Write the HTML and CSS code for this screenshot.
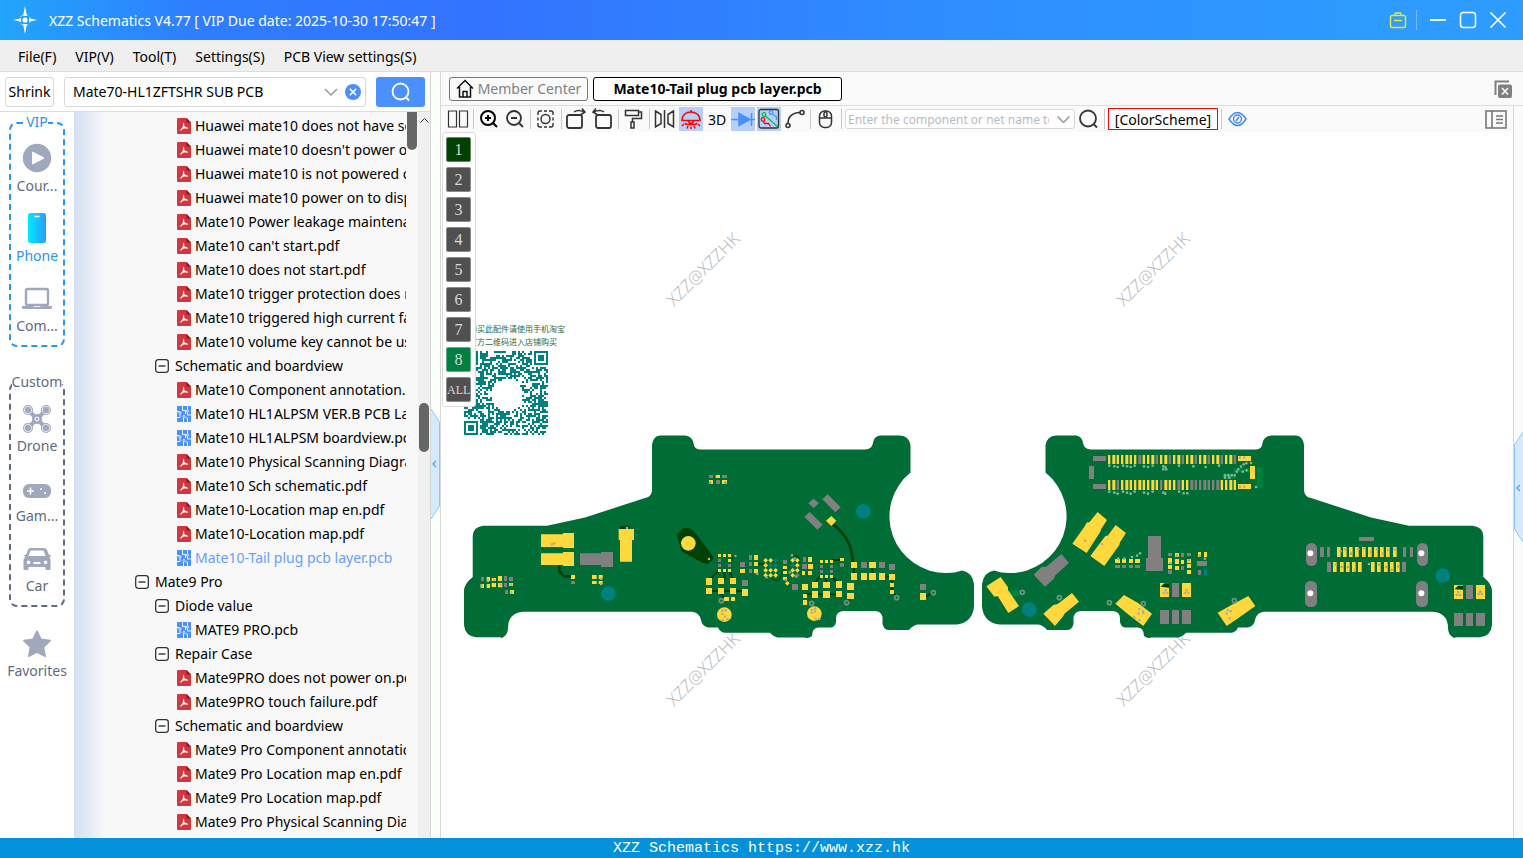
FILE: index.html
```html
<!DOCTYPE html>
<html lang="en">
<head>
<meta charset="utf-8">
<title>XZZ Schematics</title>
<link rel="stylesheet" href="styles.css">
</head>
<body>
<svg class="defs" aria-hidden="true">
  <defs>
    <linearGradient id="phoneFill"><stop offset="0" stop-color="#00eaff"/><stop offset="1" stop-color="#2f9bff"/></linearGradient>
    <symbol id="i-pdf" viewBox="0 0 14 16"><path fill="#d2373f" d="M1 0h8.500L14 4.500V15a1 1 0 0 1-1 1H1a1 1 0 0 1-1-1V1a1 1 0 0 1 1-1z"/><path fill="#8f1a22" d="M9.500 0L14 4.500h-4.500z"/><path fill="none" stroke="#fff" stroke-width="1.100" d="M6.600 5v2.200c0 2-1.300 4-3.300 5.200M6.600 7.500c.6 1.700 2 2.600 4.400 2.700M4.800 10.600c1.700-.7 3.300-1 5-.9"/></symbol>
    <symbol id="i-pcb" viewBox="0 0 14 16"><rect width="14" height="16" rx="1" fill="#4a90ff"/><path fill="none" stroke="#fff" stroke-width=".9" d="M5.500 0v4.500H8.500V8M10.500 0v4M10.500 6v3H14M0 5.500h2.500M3 8v3.500H0M6.500 11.500V16M10.500 16v-4h-2"/><g fill="none" stroke="#fff" stroke-width=".8"><circle cx="3" cy="6.800" r="1.100"/><circle cx="10.500" cy="5" r="1.100"/><circle cx="7" cy="10.500" r="1.100"/></g></symbol>
    <symbol id="i-minus" viewBox="0 0 14 14"><rect x=".7" y=".7" width="12.600" height="12.600" rx="2.500" fill="#fff" stroke="#333" stroke-width="1.300"/><path stroke="#222" stroke-width="1.300" d="M3.500 7h7"/></symbol>
  </defs>
</svg>
<div class="app">
  <header class="titlebar">
    <svg class="logo" viewBox="0 0 24 28"><path fill="#fff" d="M12 0l2 10h-4zM12 28l2-10h-4zM0 14l8-1.800v3.600zM24 14l-8-1.800v3.600z"/><circle cx="12" cy="14" r="5.500" fill="none" stroke="#bfe4ff" stroke-width="1" stroke-dasharray="3 2"/><circle cx="12" cy="14" r="2.600" fill="#fff"/></svg>
    <h1 class="title">XZZ Schematics V4.77 [ VIP Due date: 2025-10-30 17:50:47 ]</h1>
    <button class="win" aria-label="Toolbox"><svg viewBox="0 0 18 18" fill="none" stroke="#e5e83a" stroke-width="1.500"><rect x="1.500" y="4.500" width="15" height="12" rx="1.500"/><path d="M5.500 4.500L6.500 2h5l1 2.500M5 9.500h8"/></svg></button>
    <span class="win-line"></span>
    <button class="win" aria-label="Minimize"><svg viewBox="0 0 18 18" stroke="#fff" stroke-width="1.800"><path d="M1 9h16"/></svg></button>
    <button class="win" aria-label="Maximize"><svg viewBox="0 0 18 18" fill="none" stroke="#fff" stroke-width="1.500"><rect x="1.500" y="1.500" width="15" height="15" rx="3"/></svg></button>
    <button class="win" aria-label="Close"><svg viewBox="0 0 18 18" stroke="#fff" stroke-width="1.600"><path d="M1.500 1.500l15 15M16.500 1.500l-15 15"/></svg></button>
  </header>
  <nav class="menubar">
    <button>File(F)</button><button>VIP(V)</button><button>Tool(T)</button><button>Settings(S)</button><button>PCB View settings(S)</button>
  </nav>
  <main class="main">
    <section class="left">
      <div class="search">
        <button class="shrink">Shrink</button>
        <div class="combo">
          <input type="text" aria-label="Search files" value="Mate70-HL1ZFTSHR SUB PCB">
          <button aria-label="History"><svg width="14" height="8" viewBox="0 0 14 8" fill="none" stroke="#999ea8" stroke-width="1.600"><path d="M1 1l6 6 6-6"/></svg></button>
          <button aria-label="Clear"><svg width="16" height="16" viewBox="0 0 16 16"><circle cx="8" cy="8" r="8" fill="#4a8ff5"/><path stroke="#fff" stroke-width="1.600" d="M4.800 4.800l6.400 6.400M11.200 4.800l-6.400 6.400"/></svg></button>
        </div>
        <button class="go" aria-label="Search"><svg width="22" height="20" viewBox="0 0 22 20" fill="none" stroke="#fff" stroke-width="1.800"><circle cx="10.500" cy="9.500" r="8"/><path d="M16 15.500l3 3"/></svg></button>
      </div>
      <div class="browse">
        <nav class="side">
          <section class="group vip">
            <h2>VIP</h2>
            <button class="cat"><svg viewBox="0 0 30 30"><circle cx="15" cy="15" r="14.200" fill="#9fa8bc"/><path fill="#fff" stroke="#fff" stroke-width="1" stroke-linejoin="round" d="M10.500 9l11.500 6-11.500 6z"/></svg>Cour...</button>
            <button class="cat on"><svg viewBox="0 0 30 30"><rect x="6" y="0" width="18" height="30" rx="2.500" fill="url(#phoneFill)"/><path stroke="#fff" stroke-width="1.500" d="M12.500 3.500h5"/></svg>Phone</button>
            <button class="cat"><svg viewBox="0 0 30 30"><rect x="4" y="6" width="22" height="16" rx="1.500" fill="none" stroke="#9fa8bc" stroke-width="2.400"/><path fill="#9fa8bc" d="M0 23h11l1 1h6l1-1h11v1.500q0 1.500-2 1.500H2q-2 0-2-1.500z"/></svg>Com...</button>
          </section>
          <section class="group custom">
            <h2>Custom</h2>
            <button class="cat"><svg viewBox="0 0 30 30"><path stroke="#9fa8bc" stroke-width="4" d="M6 7l18 18M24 7L6 25"/><g fill="#9fa8bc"><circle cx="6" cy="7" r="5"/><circle cx="24" cy="7" r="5"/><circle cx="6" cy="25" r="5"/><circle cx="24" cy="25" r="5"/><circle cx="15" cy="16" r="5"/></g><g fill="none" stroke="#fff" stroke-width=".7"><circle cx="6" cy="7" r="3.700"/><circle cx="24" cy="7" r="3.700"/><circle cx="6" cy="25" r="3.700"/><circle cx="24" cy="25" r="3.700"/></g><circle cx="15" cy="16" r="2" fill="none" stroke="#fff"/></svg>Drone</button>
            <button class="cat"><svg viewBox="0 0 30 30"><rect x="1" y="11" width="28" height="14" rx="6" fill="#9fa8bc"/><path stroke="#fff" stroke-width="1.500" d="M5 18h7M8.500 14.500v7"/><circle cx="19" cy="16" r="1" fill="#fff"/><circle cx="23" cy="20" r="1" fill="#fff"/></svg>Gam...</button>
            <button class="cat"><svg viewBox="0 0 30 30"><path fill="#9fa8bc" fill-rule="evenodd" d="M8 5h14q2.500 0 3.300 2.500L27 12l1.500-.5q1 1.500-.8 2.500l.8 2.500V26q0 1-1 1h-3q-1 0-1-1v-2h-17v2q0 1-1 1h-3q-1 0-1-1v-9.500L3.300 14q-1.800-1-.8-2.500L4 12l1.700-4.500Q6.500 5 8 5zM8.500 7.500L6.500 13h17l-2-5.500zM6.500 17.500a1.800 1.800 0 1 0 .1 0zM23.500 17.500a1.800 1.800 0 1 0 .1 0zM11.500 19v2h7v-2z"/></svg>Car</button>
          </section>
          <button class="cat fav"><svg viewBox="0 0 30 30"><path fill="#9fa8bc" stroke="#9fa8bc" stroke-width="1.500" stroke-linejoin="round" d="M15 3l4 8.300 9.200 1.300-6.700 6.500 1.700 9.200-8.200-4.300-8.200 4.300 1.700-9.200-6.700-6.500 9.200-1.300z"/></svg>Favorites</button>
        </nav>
        <ul class="tree" id="tree"></ul>
        <div class="inner-scroll"><span></span></div>
        <div class="outer-scroll"><svg width="9" height="5" viewBox="0 0 9 5" fill="none" stroke="#333"><path d="M.5 4.500l4-4 4 4"/></svg><span></span></div>
      </div>
    </section>
    <div class="splitter"><button aria-label="Collapse"><svg viewBox="0 0 9 110"><path fill="#d6eaff" stroke="#8fc6f7" d="M0 0l8.500 13v84L0 110"/><path fill="none" stroke="#4a9ff0" stroke-width="1.200" d="M5 52L2 55l3 3"/></svg></button></div>
    <section class="work">
      <div class="tabs">
        <button class="tab home"><svg width="18" height="19" viewBox="0 0 18 19" fill="none" stroke="#111" stroke-width="1.500"><path d="M1 9.500L9 1.500l8 8M3.500 8v10h11V8M7 18v-5.500h4V18"/></svg>Member Center</button>
        <button class="tab current">Mate10-Tail plug pcb layer.pcb</button>
        <button class="closeall" aria-label="Close all"><svg width="18" height="18" viewBox="0 0 18 18"><path fill="none" stroke="#808080" stroke-width="2" d="M1.500 15V1.500H15"/><rect x="4" y="4.500" width="14" height="13.500" rx="2" fill="#808080"/><path stroke="#fff" stroke-width="1.500" d="M8 8l6 6.500M14 8l-6 6.500"/></svg></button>
      </div>
      <div class="below">
        <div class="view">
          <div class="toolbar">
            <button aria-label="Split view"><svg viewBox="0 0 24 24"><path d="M2.500 4h8v16h-8zM13.500 4h8v16h-8z" stroke-width="1.200"/></svg></button><i></i>
            <button aria-label="Zoom in"><svg viewBox="0 0 24 24" stroke="#000" stroke-width="2"><circle cx="11" cy="11" r="7"/><path d="M16 16l4 4M8 11h6M11 8v6"/></svg></button>
            <button aria-label="Zoom out"><svg viewBox="0 0 24 24"><circle cx="11" cy="11" r="7"/><path d="M16 16l4 4M8 11h6"/></svg></button><i></i>
            <button aria-label="Fit"><svg viewBox="0 0 24 24" stroke-width="1.400"><circle cx="11.500" cy="12" r="4.500"/><path d="M4 8V6q0-2 2-2h2M15 4h2q2 0 2 2v2M19 16v2q0 2-2 2h-2M8 20H6q-2 0-2-2v-2M10 4h3M10 20h3M4 10.500v3M19 10.500v3"/></svg></button><i></i>
            <button aria-label="Rotate right"><svg viewBox="0 0 24 24"><rect x="2" y="8" width="15" height="13" rx="2"/><path d="M9 5Q13 2 19.500 5M17 1.500l3 3.500-4 2.500" stroke-width="1.500"/></svg></button>
            <button aria-label="Rotate left"><svg viewBox="0 0 24 24"><rect x="5" y="8" width="15" height="13" rx="2"/><path d="M13 5Q9 2 2.500 5M5 1.500L2 5l4 2.500" stroke-width="1.500"/></svg></button><i></i>
            <button aria-label="Paint"><svg viewBox="0 0 24 24"><path d="M3.500 3.500h13v5h-13zM16.500 5h3v6.500h-9V15M9 15h3v6H9z" stroke-width="1.500"/></svg></button><i></i>
            <button aria-label="Mirror"><svg viewBox="0 0 24 24"><path d="M2.500 4l5.500 3.500v9L2.500 20zM20.500 4L15 7.500v9l5.500 3.500zM11.500 3v18" stroke-width="1.500"/></svg></button>
            <button class="active" aria-label="Lamp"><svg viewBox="0 0 24 24" stroke="#f00" stroke-width="1.500"><path d="M3 13.500C3 2 21 2 21 13.500zM12 3v2M6 16q1 1.500 3 1.500h6q2 0 3-1.500M9 14q3 5 6 0M5 17l-2 2M19 17l2 2M9 19l-1 2.500M12 19.500v2.500M15 19l1 2.500"/></svg></button>
            <button class="three">3D</button>
            <button class="active" aria-label="Diode"><svg viewBox="0 0 24 24" stroke="#4a90ff" stroke-width="1.500"><path d="M0 12.500h24M20.500 6v13"/><path fill="#4a90ff" d="M8 6.500l11 6-11 6z"/></svg></button>
            <button class="active" aria-label="Nets"><svg viewBox="0 0 24 24" stroke-width="1.300"><rect x="2" y="2.500" width="19.500" height="18.500" rx="2"/><path stroke="#00c040" d="M8 8.500l13 11.500"/><circle cx="7" cy="7.500" r="1.800" stroke="#00c040"/><circle cx="14" cy="5.500" r="1.800" stroke="#4a90ff"/><path stroke="#4a90ff" d="M15.500 7l4 3v3"/><circle cx="6" cy="12.500" r="1.800" stroke="#f00"/><path stroke="#f00" d="M6.500 14.500l1 2h4l2 3"/></svg></button>
            <button aria-label="Trace"><svg viewBox="0 0 24 24" stroke-width="1.600"><circle cx="5" cy="18.500" r="2"/><circle cx="19" cy="5.500" r="2"/><path d="M5 16.500Q5 6 17 5.500"/></svg></button><i></i>
            <button aria-label="Mouse"><svg viewBox="0 0 24 24" stroke-width="1.500"><rect x="5.500" y="4" width="12" height="16.500" rx="5"/><path d="M5.500 11h12M11.500 4v1"/><rect x="10" y="5" width="3" height="5" rx="1.500"/></svg></button><i></i>
            <div class="combo net"><input type="text" aria-label="Component or net name" placeholder="Enter the component or net name to search"><button aria-label="Open list"><svg width="13" height="7" viewBox="0 0 13 7" fill="none" stroke="#999" stroke-width="1.500"><path d="M.5 .5l6 6 6-6"/></svg></button></div>
            <button aria-label="Find"><svg viewBox="0 0 24 24" stroke-width="1.800"><circle cx="11" cy="11.500" r="8"/><path d="M17 17.500l3 3"/></svg></button><i></i>
            <button class="scheme">[ColorScheme]</button><i></i>
            <button aria-label="Visibility"><svg viewBox="0 0 24 24" stroke="#3f86f0" stroke-width="1.400"><path d="M4 12Q12.500 -1 21 12Q12.500 25 4 12z"/><circle cx="12.500" cy="12" r="4"/><path d="M11 14l3-4"/></svg></button>
            <button class="list" aria-label="Panel"><svg viewBox="0 0 24 24" stroke="#777" stroke-width="1.600"><rect x="2" y="4" width="20" height="17"/><path d="M8 4v17M12 9h7M12 12.500h7M12 16h7"/></svg></button>
          </div>
          <div class="canvas">
            <svg class="board" id="board" viewBox="441 132 1072 706" preserveAspectRatio="xMinYMin meet">
              <g class="mark">
                <text transform="translate(674 307) rotate(-45)">XZZ@XZZHK</text>
                <text transform="translate(1124 307) rotate(-45)">XZZ@XZZHK</text>
                <text transform="translate(674 707) rotate(-45)">XZZ@XZZHK</text>
                <text transform="translate(1124 707) rotate(-45)">XZZ@XZZHK</text>
              </g>
              <text class="note" x="469" y="332">购买此配件请使用手机淘宝</text>
              <text class="note" x="469" y="345">官方二维码进入店铺购买</text>
              <path id="qr" fill="#008080" shape-rendering="crispEdges"/>
              <path id="outline" fill="#006c36" d="M652 445Q653 436 660 435.500H685Q692 436 693.500 443Q694 449 700 449.500H865Q872 449 873 443Q874 436 880 435.500H900Q909 436 910.500 445V472.500A56.500 56.500 0 0 0 947 573Q955 573 962 570.500Q972 572 974 584V606Q973 622 957 624.500H918Q913 625 909 630H889Q884 630 882.500 624V617Q881 611 875 611H843Q836 612 836 618V622Q835 627 831 627.500H818Q812 628 812 636Q808 639 805 637.500H778Q774 637 770 632.700H724Q720 632 718 627.500H708Q702 626 701 620Q699 612 692 611.700H523Q508 613 508 628Q508 635 502 638L500 637.300H476Q465 636 464 625V591Q464 584 472.700 577V536Q473 527 483 525.700H547L585 517.500L645 498Q651 497 652 491z"/>
              <use href="#outline" transform="translate(1956 0) scale(-1 1)"/>
            </svg>
            <div class="layers">
              <button class="l1">1</button><button>2</button><button>3</button><button>4</button><button>5</button><button>6</button><button>7</button><button class="l8">8</button><button class="all">ALL</button>
            </div>
          </div>
        </div>
        <div class="strip"><button aria-label="Expand"><svg viewBox="0 0 9 110"><path fill="#d6eaff" stroke="#8fc6f7" d="M9 0L.5 13v84L9 110"/><path fill="none" stroke="#4a9ff0" stroke-width="1.200" d="M6 53L3 56l3 3"/></svg></button></div>
      </div>
    </section>
  </main>
  <footer class="status">XZZ Schematics https://www.xzz.hk</footer>
</div>
<script src="app.js"></script>
</body>
</html>
```

FILE: styles.css
```css
* { box-sizing: border-box; }
body { margin: 0; font-family: "Noto Sans", "Open Sans", sans-serif; font-size: 14px; color: #000; background: #fff; }
button { font: inherit; color: inherit; background: none; border: 0; padding: 0; margin: 0; }
input { font: inherit; border: 0; outline: 0; background: none; padding: 0; min-width: 0; }
svg { display: block; }
.defs { position: absolute; width: 0; height: 0; }
.app { display: flex; flex-direction: column; height: 100vh; overflow: hidden; }

.titlebar { flex: none; height: 40px; display: flex; align-items: center; gap: 12px; padding: 0 16px 0 13px; background: linear-gradient(90deg, #22a5fb 0, #2f7dff 13%, #3373ff 32%, #2f8cff 60%, #2d9bff 90%); }
.logo { width: 24px; height: 28px; }
.title { flex: 1; margin: 0; font-size: 14px; font-weight: 400; color: #fff; white-space: nowrap; }
.win { width: 18px; height: 18px; }
.win-line { width: 1px; height: 20px; margin-left: -3px; background: #74bcff; }

.menubar { flex: none; height: 32px; display: flex; align-items: center; gap: 19px; padding: 1px 18px 0; background: #efefef; border-bottom: 1px solid #dcdcdc; }

.main { flex: 1; min-height: 0; display: flex; }
.left { flex: none; width: 431px; display: flex; flex-direction: column; border-right: 1px solid #d8d8d8; }
.search { flex: none; height: 40px; display: flex; align-items: center; padding: 0 5px; border-bottom: 1px solid #dcdcdc; }
.shrink { width: 49px; height: 30px; border: 1px solid #d8d8d8; border-radius: 3px; margin-right: 10px; white-space: nowrap; }
.combo { display: flex; align-items: center; border: 1px solid #d8d8d8; border-radius: 3px; background: #fff; }
.search .combo { flex: 1; height: 30px; padding: 0 4px 0 8px; gap: 7px; }
.combo input { flex: 1; }
.go { width: 49px; height: 30px; margin-left: 10px; border-radius: 3px; background: #4a90ff; display: grid; place-items: center; }

.browse { flex: 1; min-height: 0; display: flex; overflow: hidden; }
.side { flex: none; width: 74px; padding: 10px 9px; background: #fff; color: #5e6b80; }
.group { border: 2px dashed; border-radius: 8px; height: 225px; margin-bottom: 35px; }
.group h2 { width: max-content; margin: -12px auto 11px; font-size: 14px; font-weight: 400; line-height: 20px; background: #fff; }
.vip { border-color: #2b95f5; }
.vip h2, .cat.on { color: #2b95f5; }
.custom { border-color: #5e6b80; margin-bottom: 21px; }
.cat { width: 100%; display: flex; flex-direction: column; align-items: center; gap: 3px; margin-bottom: 17px; line-height: 20px; }
.cat svg { width: 30px; height: 30px; }

.tree { flex: 1; min-width: 0; margin: 0; padding: 2px 0 0; list-style: none; overflow: hidden; background: linear-gradient(90deg, #d5e0f2, #f8f8f8 32px); }
.row { height: 24px; width: 100%; display: flex; align-items: center; gap: 4px; white-space: nowrap; line-height: 20px; }
.row svg { flex: none; width: 14px; height: 16px; }
.d0 { padding-left: 61px; gap: 6px; }
.d1 { padding-left: 81px; gap: 6px; }
.d2 { padding-left: 103px; }
.d0 svg, .d1 svg { height: 14px; }
.row.sel { color: #6a9dff; }
.inner-scroll { flex: none; width: 12px; background: #f8f8f8; }
.inner-scroll span { display: block; width: 10px; height: 38px; margin-left: 1px; border-radius: 0 0 5px 5px; background: #666; }
.outer-scroll { flex: none; width: 12px; background: #f0f0f0; padding: 6px 1px; display: flex; flex-direction: column; align-items: center; gap: 280px; }
.outer-scroll span { width: 10px; height: 49px; border-radius: 5px; background: #666; }

.splitter { flex: none; width: 10px; background: #fafffa; border-right: 1px solid #d8d8d8; display: flex; align-items: center; padding-top: 18px; }
.splitter svg, .strip svg { width: 9px; height: 110px; }

.work { flex: 1; min-width: 0; display: flex; flex-direction: column; }
.tabs { flex: none; height: 34px; display: flex; align-items: center; gap: 5px; padding: 0 11px 0 8px; background: #fafafa; border-bottom: 1px solid #dcdcdc; }
.tab { height: 24px; border: 1px solid #777; border-radius: 3px; background: #fff; white-space: nowrap; }
.home { width: 139px; display: flex; align-items: center; justify-content: center; gap: 4px; color: #808080; background: #fafafa; }
.current { width: 249px; border-color: #000; font-weight: 700; }
.closeall { margin-left: auto; }
.below { flex: 1; min-height: 0; display: flex; }
.view { flex: 1; min-width: 0; display: flex; flex-direction: column; }
.strip { flex: none; width: 10px; border-left: 1px solid #d8d8d8; background: #fafafa; display: flex; align-items: center; padding-top: 30px; }

.toolbar { flex: none; height: 26px; display: flex; align-items: center; gap: 2px; padding: 0 5px; background: #fafafa; }
.toolbar > button { flex: none; width: 24px; height: 24px; }
.toolbar > button svg { width: 24px; height: 24px; fill: none; }
.toolbar svg:not([stroke]) { stroke: #333; }
.toolbar svg:not([stroke-width]) { stroke-width: 1.8px; }
.toolbar i { flex: none; width: 1px; height: 20px; margin: 0 1px; background: #c8c8c8; }
.toolbar .active { background: #b5d0fb; }
.net { width: 230px; height: 20px; padding: 0 4px 0 2px; gap: 8px; }
.net input { font-size: 12px; }
.net input::placeholder { color: #b8bcc4; opacity: 1; }
.toolbar .scheme { width: 110px; height: 22px; border: 1px solid #f00; background: #fff; }
.toolbar .list { margin-left: auto; }

.canvas { flex: 1; min-height: 0; position: relative; background: #fff; }
.board { width: 100%; height: 100%; }
.mark { font-family: "Open Sans", "Noto Sans", sans-serif; font-size: 17px; font-weight: 300; fill: #b4b4b4; }
.note { font-family: "Noto Sans CJK SC", sans-serif; font-size: 8px; fill: #2a6b45; }
.layers { position: absolute; left: 1px; top: 0; width: 34px; padding: 4px; display: flex; flex-direction: column; gap: 5px; background: #fff; border: 1px solid #dcdcdc; border-radius: 3px; }
.layers button { width: 25px; height: 25px; margin-left: -1px; display: grid; place-items: center; border: 1px solid #8a8a8a; border-radius: 2px; background: #505050; color: #d8d8d8; font: 16px/20px "Liberation Serif", serif; }
.layers .l1 { background: #004000; border-color: #5c885c; }
.layers .l8 { background: #008040; border-color: #5cae86; }
.layers .all { font-size: 12px; }

.status { flex: none; height: 20px; padding-top: 1px; background: #0391dc; color: #fff; text-align: center; font: 15px/20px "Liberation Mono", monospace; }
```

FILE: app.js
```js
// File tree: [depth, kind, label]
const rows = [
  [2, 'pdf', 'Huawei mate10 does not have sound.pdf'],
  [2, 'pdf', "Huawei mate10 doesn't power on.pdf"],
  [2, 'pdf', 'Huawei mate10 is not powered on.pdf'],
  [2, 'pdf', 'Huawei mate10 power on to display.pdf'],
  [2, 'pdf', 'Mate10 Power leakage maintenance.pdf'],
  [2, 'pdf', "Mate10 can't start.pdf"],
  [2, 'pdf', 'Mate10 does not start.pdf'],
  [2, 'pdf', 'Mate10 trigger protection does not.pdf'],
  [2, 'pdf', 'Mate10 triggered high current fault.pdf'],
  [2, 'pdf', 'Mate10 volume key cannot be used.pdf'],
  [1, 'minus', 'Schematic and boardview'],
  [2, 'pdf', 'Mate10 Component annotation.pdf'],
  [2, 'pcb', 'Mate10 HL1ALPSM VER.B PCB Layer.pcb'],
  [2, 'pcb', 'Mate10 HL1ALPSM boardview.pcb'],
  [2, 'pdf', 'Mate10 Physical Scanning Diagram.pdf'],
  [2, 'pdf', 'Mate10 Sch schematic.pdf'],
  [2, 'pdf', 'Mate10-Location map en.pdf'],
  [2, 'pdf', 'Mate10-Location map.pdf'],
  [2, 'pcb', 'Mate10-Tail plug pcb layer.pcb', 'sel'],
  [0, 'minus', 'Mate9 Pro'],
  [1, 'minus', 'Diode value'],
  [2, 'pcb', 'MATE9 PRO.pcb'],
  [1, 'minus', 'Repair Case'],
  [2, 'pdf', 'Mate9PRO does not power on.pdf'],
  [2, 'pdf', 'Mate9PRO touch failure.pdf'],
  [1, 'minus', 'Schematic and boardview'],
  [2, 'pdf', 'Mate9 Pro Component annotation.pdf'],
  [2, 'pdf', 'Mate9 Pro Location map en.pdf'],
  [2, 'pdf', 'Mate9 Pro Location map.pdf'],
  [2, 'pdf', 'Mate9 Pro Physical Scanning Diagram.pdf']
];
document.getElementById('tree').innerHTML = rows.map(([d, k, t, s]) =>
  `<li><button class="row d${d} ${s || ''}"><svg><use href="#i-${k}"/></svg><span>${t}</span></button></li>`).join('');

// QR code, 42 x 42 modules of 2 units
let seed = 77;
const rnd = () => (seed = (seed * 1103515245 + 12345) % 2147483648) / 2147483648;
let qr = '';
const finder = (x, y, cx, cy) => {
  const dx = x - cx, dy = y - cy;
  if (dx < -1 || dy < -1 || dx > 7 || dy > 7) return null;
  const r = Math.max(Math.abs(dx - 3), Math.abs(dy - 3));
  return r === 3 || r < 2;
};
for (let y = 0; y < 42; y++) for (let x = 0; x < 42; x++) {
  let on = rnd() < 0.54;
  if (Math.hypot(x - 21, y - 21.5) < 8) on = false;
  for (const [cx, cy] of [[0, 0], [35, 0], [0, 35]]) {
    const f = finder(x, y, cx, cy);
    if (f !== null) on = f;
  }
  if (on) qr += `M${464 + x * 2} ${351 + y * 2}h2v2h-2z`;
}
document.getElementById('qr').setAttribute('d', qr);

// Board artwork, drawn at three units per canvas unit
const Y = '#ffd93b', G = '#808080', T = '#008080', D = '#004000';
const rects = (fill, list) => `<path fill="${fill}" d="${list.map(([x, y, w, h]) => `M${x} ${y}h${w}v${h}h${-w}z`).join('')}"/>`;
const polys = (fill, list) => list.map(p => `<polygon fill="${fill}" points="${p}"/>`).join('');
const dots = (fill, r, list) => list.map(([x, y]) => `<circle fill="${fill}" cx="${x}" cy="${y}" r="${r}"/>`).join('');
const rings = list => list.map(([x, y]) => `<circle fill="none" stroke="#6f9480" stroke-width="5" cx="${x}" cy="${y}" r="6"/>`).join('');
const lines = (w, d) => `<path fill="none" stroke="${D}" stroke-width="${w}" d="${d}"/>`;
const diamonds = (fill, list) => polys(fill, list.map(([x, y]) => `${x - 7},${y} ${x},${y - 7} ${x + 7},${y} ${x},${y + 7}`));
const at = (x, body) => `<g transform="translate(${x} 430) scale(.33333)">${body}</g>`;

const leftA = lines(8, 'M313 405v20l15 14h20') +
  polys(D, ['667,312 683,295 703,295 716,303 773,377 773,390 756,402 742,398 680,364 667,322']) +
  rects(D, [[495,288,30,10]]) +
  rects(Y, [[258,313,66,38],[324,309,33,45],[258,370,66,35],[324,366,33,42],[491,297,46,33],[495,330,36,65],[348,435,12,12],[411,435,14,12],[431,435,12,12],[411,453,14,9],[431,453,12,9],[95,441,10,12],[110,444,13,9],[129,438,12,15],[77,462,10,12],[95,462,10,12],[110,459,13,12],[129,459,13,13],[162,459,12,9],[165,480,12,12]]) +
  rects(G, [[375,370,63,35],[438,366,36,45],[78,441,9,12],[147,438,9,15],[162,441,12,12],[147,459,9,12],[150,480,9,12],[348,453,12,9]]) +
  dots(T, 22, [[460,491]]) + dots(Y, 22, [[700,340]]) +
  dots('#b8b08a', 4, [[291,343],[298,340],[516,294],[762,387],[80,467],[99,453],[118,450],[137,463],[168,464],[438,446],[438,462],[168,487]]);

const leftB = lines(8, 'M430 283Q488 330 488 396') +
  lines(6, 'M84 424L57 450M103 426V450M120 424l9 26M57 483h100M204 402h18M93 492l12 15M390 440l-15 18M408 444v14M425 440l20 18M345 493h100M425 390h30M492 414v20M547 414v16M576 440h30M606 450v40M612 490l8 12M708 499l20-10M481 507l-10 10') +
  lines(3, 'M242 440q20 25 30 0t15-28M308 380q24-10 20 20M120 390l16-12') +
  rects(Y, [[77,135,13,9],[57,150,12,12],[96,150,15,12],[84,372,9,9],[99,372,9,9],[114,372,9,9],[114,387,9,9],[84,417,9,9],[99,417,9,9],[114,417,9,9],[48,444,18,21],[84,444,18,18],[120,444,18,18],[48,474,18,18],[84,474,18,18],[120,474,18,18],[156,477,18,21],[102,501,15,12],[123,501,12,12],[150,417,15,12],[192,375,12,15],[192,396,12,12],[192,417,12,13],[279,408,12,9],[279,423,12,9],[279,441,12,9],[354,381,12,15],[354,402,15,15],[336,423,9,12],[354,423,12,12],[336,462,18,18],[339,492,12,12],[339,510,12,15],[366,456,18,18],[399,456,21,18],[438,453,18,21],[366,483,18,21],[399,483,21,21],[438,483,18,18],[471,459,21,21],[471,489,21,18],[390,390,9,9],[405,390,9,9],[420,390,9,9],[390,435,9,9],[405,435,9,9],[420,435,9,9],[450,384,12,9],[483,396,18,18],[537,396,21,18],[483,429,18,21],[513,429,18,21],[537,429,21,21],[567,429,18,21],[597,432,18,18],[600,459,12,12],[600,480,12,12],[690,489,18,21]]) +
  rects(G, [[57,135,12,9],[78,150,12,12],[96,135,15,9],[84,387,9,9],[84,402,9,9],[114,402,9,9],[150,396,15,15],[177,375,9,15],[177,396,9,12],[177,417,9,12],[156,450,18,18],[279,390,12,12],[339,381,9,15],[336,402,15,15],[306,462,18,18],[390,405,9,9],[420,405,9,9],[390,420,9,9],[420,420,9,9],[450,400,12,10],[513,396,18,18],[567,396,18,18],[597,402,18,18],[690,462,18,18]]) +
  polys(G, ['355,220 371,206 387,220 371,234','397,208 413,193 452,232 436,247','343,260 359,246 398,284 382,299']) +
  polys(Y, ['408,272 424,258 439,272 424,288']) +
  diamonds(Y, [[227,391],[242,391],[227,406],[227,421],[242,421],[257,421],[227,436],[242,436],[257,436],[308,391],[322,391],[322,406],[308,421],[322,421],[308,436],[292,460]]) +
  diamonds(T, [[257,391],[242,406],[257,406],[308,406]]) + diamonds(G, [[322,436]]) +
  dots(T, 22, [[520,244]]) + dots(Y, 22, [[103,554],[373,551]]) +
  dots('#b8b08a', 4, [[97,542],[107,541],[97,552],[105,560],[98,570],[113,568],[366,540],[375,536],[365,549],[375,545],[377,567],[388,567]]) +
  dots('#7fa38d', 4, [[60,158],[106,158],[136,378],[306,376],[314,385],[202,432],[230,442],[300,427],[287,450],[318,440]]) +
  rings([[94,512],[365,520],[470,518],[620,503],[730,488]]);

// Board-to-board connector: 30 contacts per row, listed indexes are unconnected
const row = (y, h, off, skip) => {
  const c = [[], []];
  for (let i = 0; i < 30; i++) c[skip.includes(i) ? 1 : 0].push([399 + i * 13 + off, y, i % 3 === 1 ? 9 : 7, h]);
  return rects(Y, c[0]) + rects(G, c[1]);
};
const small = [403,418,428,444,456,467,479,507,519,533,565,571,612,655,692,732];
const rightA = rects('#008040', [[100,480,34,20],[845,112,18,62],[745,130,38,16],[775,115,50,12]]) +
  row(75, 27, 0, [7,11,14,17,20,23,26,29]) + row(150, 30, 0, [2,12,16,19,20,21,22,23,24,25]) +
  rects(Y, [[789,78,39,15],[789,162,39,15],[825,108,15,39],[420,387,15,12],[441,387,12,12],[462,387,12,12],[480,387,15,12],[600,369,12,12],[579,384,12,18],[600,387,12,15],[618,390,9,12],[636,387,12,12],[579,405,12,12],[600,408,12,12],[636,402,12,12],[636,420,12,12],[669,366,9,15],[687,366,9,15],[555,459,27,42],[621,459,27,42]]) +
  rects(G, [[354,78,39,15],[342,108,15,39],[354,162,39,15],[420,405,15,9],[441,405,12,9],[462,405,12,9],[480,405,15,9],[519,318,39,66],[513,384,51,39],[579,369,12,9],[618,369,9,12],[636,369,12,9],[618,408,9,12],[579,420,12,12],[666,393,30,15],[669,420,9,15],[591,459,21,42],[555,540,27,42],[591,540,21,42],[621,540,27,42]]) +
  rects(T, [[687,420,9,15]]) + polys(D, ['557,470 568,460 582,460 582,473']) +
  polys(Y, ['368,246 396,270 378,298 376,305 335,369 292,341 325,295 336,277 343,277','422,285 453,309 435,337 433,345 388,408 346,378 382,330 392,317 398,317','34,469 77,441 99,472 99,480 132,528 100,549 68,498 58,500','291,489 312,515 270,550 262,562 240,588 205,551 235,525 248,522','447,495 488,518 531,551 505,588 462,555 421,521','728,548 768,526 820,498 841,528 785,568 755,588']) +
  polys(G, ['259,372 282,398 240,437 236,447 210,470 176,434 200,410 213,411']) +
  dots(T, 22, [[163,539]]) +
  dots('#7fb896', 4, small.map((x, i) => [x, 107 + i % 3 * 2]).concat(small.slice(0, 13).map((x, i) => [x, 185 + i % 3 * 3]), [[565,118],[574,118],[626,190],[637,190],[750,136],[760,136],[770,136],[750,143],[763,143],[779,136],[785,125],[790,118],[798,110],[806,103],[814,100],[828,99],[803,125],[815,121],[843,171],[430,386],[448,386],[471,381],[486,377],[495,370],[587,399],[606,377],[675,377],[690,386],[641,391]])) +
  dots('#b8b08a', 4, [[330,332],[381,342],[572,481],[566,489],[576,489],[635,481],[630,489],[640,489],[493,537],[504,543],[490,551],[505,549],[478,562],[493,570],[759,541],[768,544],[755,551],[764,565],[795,83],[808,83],[795,170],[808,170]]) +
  rings([[142,487],[253,503],[403,518],[505,521],[778,512]]);

const pins = (xs, y) => xs.map(x => [x, y, 11, 30]);
const top2 = [321,339,357,375,396,414,432,450,468,489];
const low2 = [309,330,348,366,384,423,441,462,480,498];
const slot = [[228,339,33,69],[225,453,36,78],[561,339,33,69],[558,453,36,78]]
  .map(([x, y, w, h]) => `<rect x="${x}" y="${y}" width="${w}" height="${h}" rx="16" fill="${G}"/>`).join('');
const rightB = rects(Y, pins(top2, 351).concat(pins(low2, 396), [[672,465,27,42],[738,465,27,42]])) +
  rects(G, [[387,321,45,12],[270,351,12,30],[291,351,9,30],[519,351,9,30],[540,351,9,30],[291,396,12,30],[516,396,12,30],[708,465,21,42],[672,549,27,39],[708,549,21,39],[738,549,27,39]]) +
  polys(D, ['674,478 684,467 699,467 699,479']) + slot +
  dots('#fff', 9, [[241,370],[241,490],[574,370],[574,490]]) +
  dots(T, 22, [[638,437]]) +
  dots('#a8ad87', 4, [[332,364],[345,358],[363,371],[385,358],[404,355],[422,366],[441,358],[459,371],[475,360],[494,358],[318,404],[335,411],[354,411],[375,422],[417,402],[447,404],[468,411],[485,420],[505,409],[685,486],[680,495],[690,495],[751,485],[756,492],[746,492]]);

document.getElementById('board').insertAdjacentHTML('beforeend',
  at(455, leftA) + at(690, leftB) + at(975, rightA) + at(1230, rightB));
```
